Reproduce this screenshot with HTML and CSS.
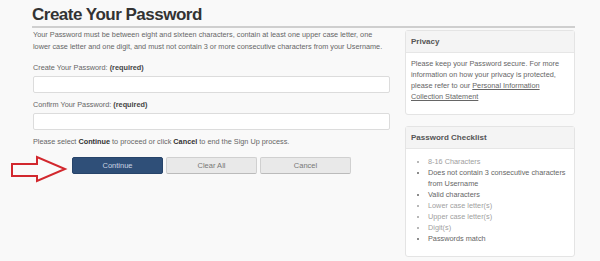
FILE: index.html
```html
<!DOCTYPE html>
<html lang="en">
<head>
    <meta charset="UTF-8">
    <meta name="viewport" content="width=device-width, initial-scale=1.0">
    <title>Create Your Password</title>
    <link rel="stylesheet" href="styles.css">
</head>
<body>
    <div class="container">
        <h1>Create Your Password</h1>

        <div class="content">
            <div class="main">
                <p class="intro">Your Password must be between eight and sixteen characters, contain at least one upper case letter, one lower case letter and one digit, and must not contain 3 or more consecutive characters from your Username.</p>

                <label class="field-label" for="password">Create Your Password: <b>(required)</b></label>
                <input class="field" type="password" id="password">

                <label class="field-label second" for="confirm">Confirm Your Password: <b>(required)</b></label>
                <input class="field" type="password" id="confirm">

                <p class="note">Please select <b>Continue</b> to proceed or click <b>Cancel</b> to end the Sign Up process.</p>

                <div class="actions">
                    <button class="btn btn-primary">Continue</button>
                    <button class="btn">Clear All</button>
                    <button class="btn">Cancel</button>
                </div>
            </div>

            <div class="sidebar">
                <div class="panel">
                    <div class="panel-header">Privacy</div>
                    <div class="panel-body">
                        Please keep your Password secure. For more information on how your privacy is protected, please refer to our <a href="#">Personal Information Collection Statement</a>
                    </div>
                </div>

                <div class="panel checklist">
                    <div class="panel-header">Password Checklist</div>
                    <ul class="checklist-items">
                        <li class="met">8-16 Characters</li>
                        <li>Does not contain 3 consecutive characters from Username</li>
                        <li>Valid characters</li>
                        <li class="met">Lower case letter(s)</li>
                        <li class="met">Upper case letter(s)</li>
                        <li class="met">Digit(s)</li>
                        <li>Passwords match</li>
                    </ul>
                </div>
            </div>
        </div>
    </div>

    <svg class="arrow" width="58" height="28" viewBox="0 0 58 28">
        <path d="M2 9 L27 9 L27 2 L55 14 L27 26 L27 21 L2 21 Z" fill="#fafafa" stroke="#d2282e" stroke-width="2" stroke-linejoin="miter"/>
    </svg>
</body>
</html>
```

FILE: styles.css
```css
body {
    font-family: "Liberation Sans", Arial, sans-serif;
    margin: 0;
    background-color: #f9f9f9;
    color: #666;
}
.container {
    margin-left: 32px;
    width: 543px;
}
h1 {
    margin: 0;
    padding-top: 4px;
    font-size: 17px;
    line-height: 22px;
    letter-spacing: -0.5px;
    color: #333;
    border-bottom: 2px solid #cfcfcf;
}
.content {
    display: flex;
    gap: 14px;
}
.main {
    width: 358px;
    margin-left: 1px;
    font-size: 7.3px;
    line-height: 12px;
}
.intro {
    margin: 1px 0 0;
}
.field-label {
    display: block;
    margin-top: 9px;
    color: #666;
}
.field-label b {
    color: #444;
}
.field-label.second {
    margin-top: 6px;
}
.field {
    display: block;
    box-sizing: border-box;
    width: 357px;
    height: 17px;
    margin-top: 2px;
    border: 1px solid #dcdcdc;
    border-radius: 2px;
    background-color: white;
}
.note {
    margin: 6px 0 0;
}
.note b {
    color: #333;
}
.actions {
    display: flex;
    gap: 3px;
    margin-top: 9px;
    margin-left: 39px;
}
.btn {
    box-sizing: border-box;
    width: 91px;
    height: 17px;
    padding: 0;
    font-family: "Liberation Sans", Arial, sans-serif;
    font-size: 7.5px;
    color: #777;
    background-color: #e9e9e9;
    border: 1px solid #d0d0d0;
    border-bottom-color: #bbb;
    border-radius: 2px;
}
.btn-primary {
    color: #c9d3e2;
    background-color: #2f4f78;
    border-color: #27446a;
}
.sidebar {
    width: 170px;
    margin-top: 2px;
    font-size: 7.3px;
    line-height: 11px;
}
.panel {
    background-color: white;
    border: 1px solid #e4e4e4;
    border-radius: 3px;
}
.panel-header {
    height: 21px;
    line-height: 21px;
    padding-left: 5px;
    font-size: 8px;
    font-weight: bold;
    color: #555;
    background-color: #f4f4f4;
    border-bottom: 1px solid #e6e6e6;
}
.panel-body {
    padding: 5px 6px 12px 5px;
}
.panel-body a {
    color: #666;
}
.checklist {
    margin-top: 11px;
}
.checklist-items {
    margin: 0;
    padding: 7px 2px 12px 22px;
    color: #666;
}
.checklist-items li.met {
    color: #a0a0a0;
}
.arrow {
    position: absolute;
    left: 10px;
    top: 155px;
}
```
